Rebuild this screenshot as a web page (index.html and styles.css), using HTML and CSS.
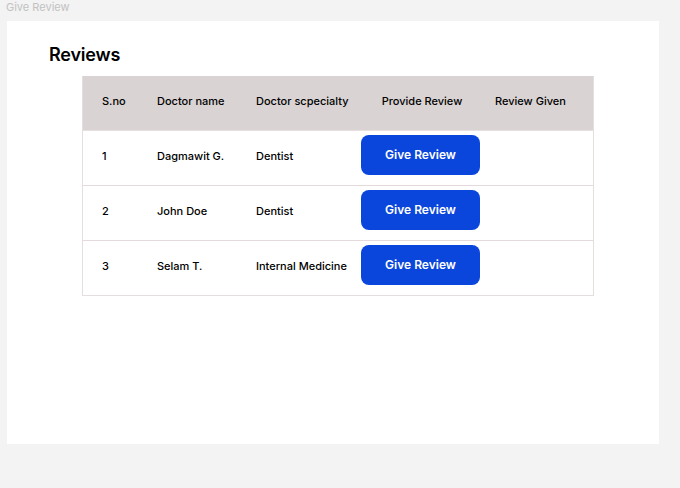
FILE: index.html
```html
<!DOCTYPE html>
<html>
<head>
<meta charset="utf-8">
<link rel="stylesheet" href="styles.css">
</head>
<body>
<div class="frame-label">Give Review</div>
<main class="frame">
  <h1 class="title">Reviews</h1>
  <div class="table">
    <div class="row head">
      <div class="c c1">S.no</div>
      <div class="c c2">Doctor name</div>
      <div class="c c3">Doctor scpecialty</div>
      <div class="c c4">Provide Review</div>
      <div class="c c5">Review Given</div>
    </div>
    <div class="row">
      <div class="c c1">1</div>
      <div class="c c2">Dagmawit G.</div>
      <div class="c c3">Dentist</div>
      <div class="c c4"><button class="btn">Give Review</button></div>
      <div class="c c5"></div>
    </div>
    <div class="row">
      <div class="c c1">2</div>
      <div class="c c2">John Doe</div>
      <div class="c c3">Dentist</div>
      <div class="c c4"><button class="btn">Give Review</button></div>
      <div class="c c5"></div>
    </div>
    <div class="row">
      <div class="c c1">3</div>
      <div class="c c2">Selam T.</div>
      <div class="c c3">Internal Medicine</div>
      <div class="c c4"><button class="btn">Give Review</button></div>
      <div class="c c5"></div>
    </div>
  </div>
</main>
</body>
</html>
```
FILE: styles.css
```css
* { box-sizing: border-box; }
html, body {
  margin: 0;
  padding: 0;
  background: #f3f3f3;
  font-family: Inter, "Noto Sans", sans-serif;
  color: #000;
}
.frame-label {
  height: 21px;
  padding: 1px 0 0 6px;
  font-size: 11px;
  line-height: 13px;
  color: #c2c2c2;
}
.frame {
  margin-left: 7px;
  width: 652px;
  height: 423px;
  background: #fff;
  padding: 23px 0 0 42px;
}
.title {
  margin: 0;
  font-size: 18px;
  line-height: 22px;
  font-weight: 600;
  letter-spacing: -0.2px;
}
.table {
  margin-top: 10px;
  margin-left: 33px;
  width: 512px;
  border: 1px solid #e3dfdf;
  border-top: none;
}
.row {
  display: grid;
  grid-template-columns: 55px 99px 123px 124px 1fr;
  align-items: center;
  height: 55px;
  padding-bottom: 4px;
  border-bottom: 1px solid #e4d9db;
  font-size: 11px;
  font-weight: 500;
}
.row:last-child { border-bottom: none; height: 54px; }
.head {
  background: #d9d3d3;
  border-bottom: 1px solid #e7dfe0;
}
.c1, .c2, .c3 { padding-left: 19px; }
.c4 { text-align: center; }
.head .c4 { padding-left: 0; }
.c5 { padding-left: 11px; }
.row:not(.head) .c4 { text-align: left; padding-left: 1px; }
.btn {
  display: block;
  width: 119px;
  height: 40px;
  margin-top: -3px;
  border: none;
  border-radius: 8px;
  background: #0a46dc;
  color: #fff;
  font-family: Inter, "Noto Sans", sans-serif;
  font-size: 12px;
  font-weight: 600;
  padding: 0;
}
```
